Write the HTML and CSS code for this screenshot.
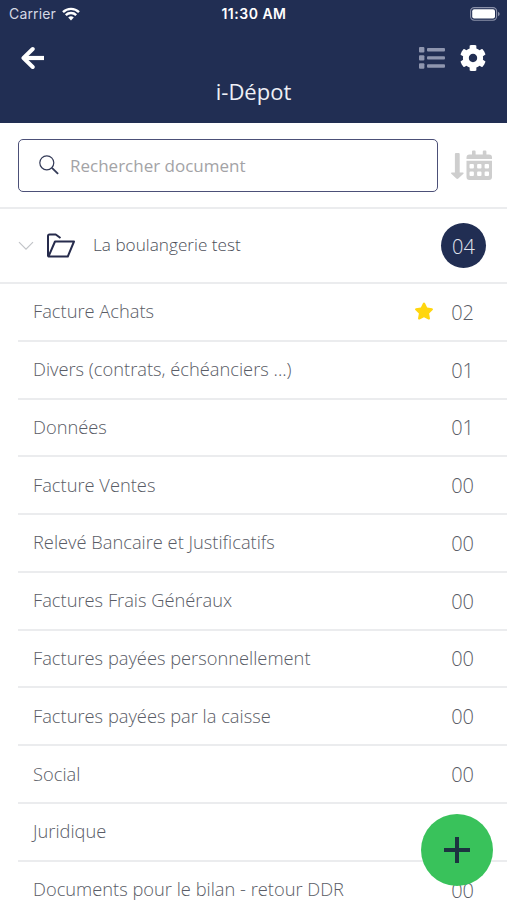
FILE: index.html
```html
<!DOCTYPE html>
<html lang="fr">
<head>
<meta charset="utf-8">
<title>i-Dépot</title>
<link rel="stylesheet" href="styles.css">
</head>
<body>
<header class="header">
  <div class="status">
    <div class="carrier"><span>Carrier</span>
      <svg class="wifi" viewBox="0 0 18 14" width="18" height="14" fill="none" stroke="#fff" stroke-width="2.4"><path d="M1 5.2a11.3 11.3 0 0 1 16 0M3.8 8.2a7.4 7.4 0 0 1 10.4 0"/><path d="M9 13.6l-2.8-3a4 4 0 0 1 5.6 0z" fill="#fff" stroke="none"/></svg>
    </div>
    <div class="time">11:30 AM</div>
    <svg class="battery" viewBox="0 0 30 14" width="30" height="14"><rect x=".6" y=".6" width="26" height="12.6" rx="3.6" fill="none" stroke="#8b91a9" stroke-width="1.1"/><rect x="2.2" y="2.2" width="22.8" height="9.4" rx="2" fill="#fff"/><path d="M28 4.8v4.4q1.7-.7 1.7-2.2T28 4.8z" fill="#8b91a9"/></svg>
  </div>
  <div class="toolbar">
    <svg class="back" viewBox="0 0 24 24" width="24" height="24" fill="none" stroke="#fff" stroke-width="4" stroke-linecap="round" stroke-linejoin="round"><path d="M11.700 3L2.500 12l9.200 9"/><path d="M4 12h19" stroke-linecap="butt" stroke-width="4.200"/></svg>
    <div class="actions">
      <svg viewBox="0 0 26 22" width="26" height="22" fill="#8f96af"><rect width="5.4" height="5.4" rx="1"/><rect y="8.2" width="5.4" height="5.4" rx="1"/><rect y="16.3" width="5.4" height="5.4" rx="1"/><rect x="8" y="1" width="18" height="3.4" rx="1"/><rect x="8" y="9.2" width="18" height="3.4" rx="1"/><rect x="8" y="17.3" width="18" height="3.4" rx="1"/></svg>
      <svg viewBox="8 8 496 496" width="26" height="26" fill="#fff"><path d="M487.400 315.700l-42.600-24.600c4.300-23.200 4.300-47 0-70.200l42.600-24.600c4.900-2.800 7.100-8.600 5.500-14-11.100-35.600-30-67.800-54.700-94.600-3.800-4.100-10-5.100-14.800-2.300L380.800 110c-17.900-15.400-38.500-27.300-60.800-35.100V25.800c0-5.600-3.900-10.500-9.400-11.700-36.700-8.200-74.300-7.800-109.200 0-5.500 1.200-9.400 6.100-9.400 11.700V75c-22.200 7.900-42.800 19.800-60.800 35.100L88.700 85.500c-4.900-2.800-11-1.900-14.800 2.300-24.700 26.700-43.600 58.900-54.700 94.600-1.700 5.400.6 11.200 5.500 14L67.300 221c-4.300 23.200-4.300 47 0 70.200l-42.600 24.600c-4.900 2.800-7.100 8.600-5.500 14 11.100 35.600 30 67.800 54.700 94.600 3.800 4.100 10 5.100 14.800 2.300l42.600-24.600c17.900 15.400 38.500 27.300 60.800 35.100v49.200c0 5.600 3.900 10.500 9.400 11.700 36.700 8.200 74.300 7.800 109.200 0 5.500-1.200 9.400-6.100 9.400-11.700v-49.200c22.200-7.900 42.800-19.800 60.800-35.100l42.600 24.600c4.900 2.800 11 1.900 14.800-2.300 24.700-26.700 43.600-58.900 54.700-94.600 1.500-5.500-.7-11.300-5.600-14.100zM256 336c-44.100 0-80-35.900-80-80s35.900-80 80-80 80 35.900 80 80-35.900 80-80 80z"/></svg>
    </div>
  </div>
  <h1 class="title">i-Dépot</h1>
</header>
<section class="search-bar">
  <div class="search">
    <svg viewBox="0 0 20 20" width="20" height="20" fill="none" stroke="#343b58"><circle cx="7.800" cy="7.800" r="7" stroke-width="1.200"/><path d="M12.900 12.900l6.200 6" stroke-width="1.900"/></svg>
    <span>Rechercher document</span>
  </div>
  <svg class="sort" viewBox="0 0 42 31" width="42" height="31" fill="#cecece"><path d="M3.900 4q0-1 1-1h2.800q1 0 1 1v18.500h3.200q1.300.2.500 1.300l-5.100 4.800q-1 .8-2 0L.3 23.800q-.8-1.100.4-1.300h3.200z"/><path fill-rule="evenodd" d="M15.500 9V7.500q0-3 3-3H21V1.500q0-1 1-1h1.600q1 0 1 1v3h7.200v-3q0-1 1-1h1.600q1 0 1 1v3H38q3 0 3 3V9zM15.500 10.800H41V27q0 3-3 3H18.500q-3 0-3-3zM18.500 15v2.600q0 1 1 1h2.400q1 0 1-1V15q0-1-1-1h-2.400q-1 0-1 1zm7.600 0v2.600q0 1 1 1h2.400q1 0 1-1V15q0-1-1-1h-2.400q-1 0-1 1zm7.500 0v2.600q0 1 1 1H37q1 0 1-1V15q0-1-1-1h-2.400q-1 0-1 1zM18.500 22.500v2.600q0 1 1 1h2.400q1 0 1-1v-2.600q0-1-1-1h-2.400q-1 0-1 1zm7.600 0v2.600q0 1 1 1h2.400q1 0 1-1v-2.600q0-1-1-1h-2.400q-1 0-1 1zm7.500 0v2.600q0 1 1 1H37q1 0 1-1v-2.600q0-1-1-1h-2.400q-1 0-1 1z"/></svg>
</section>
<section class="folder">
  <svg viewBox="0 0 16 10" width="16" height="10" fill="none" stroke="#c2c4c8" stroke-width="1.200"><path d="M1 1.200l7 7 7-7"/></svg>
  <svg class="folder-icon" viewBox="0 0 30 26" width="30" height="26" fill="none" stroke="#262b4c" stroke-width="2" stroke-linejoin="round"><path d="M2.500 23.500L9 8.500h19L21.800 23.500zM2 23.500V3q0-1.500 1.500-1.500h6.200L14.500 5"/></svg>
  <span class="folder-name">La boulangerie test</span>
  <span class="badge">04</span>
</section>
<ul class="list">
  <li class="row"><span class="label">Facture Achats</span><svg class="star" viewBox="20 0 536 512" width="18" height="18" fill="#ffd60f"><path d="M259.300 17.800L194 150.200 47.900 171.500c-26.200 3.800-36.700 36.100-17.700 54.600l105.700 103-25 145.500c-4.500 26.300 23.200 46 46.400 33.700L288 439.600l130.700 68.700c23.200 12.200 50.900-7.400 46.400-33.700l-25-145.500 105.700-103c19-18.500 8.500-50.800-17.700-54.600L382 150.200 316.700 17.800c-11.700-23.600-45.600-23.900-57.400 0z"/></svg><span class="count">02</span></li>
  <li class="row"><span class="label">Divers (contrats, échéanciers ...)</span><span class="count">01</span></li>
  <li class="row"><span class="label">Données</span><span class="count">01</span></li>
  <li class="row"><span class="label">Facture Ventes</span><span class="count">00</span></li>
  <li class="row"><span class="label">Relevé Bancaire et Justificatifs</span><span class="count">00</span></li>
  <li class="row"><span class="label">Factures Frais Généraux</span><span class="count">00</span></li>
  <li class="row"><span class="label">Factures payées personnellement</span><span class="count">00</span></li>
  <li class="row"><span class="label">Factures payées par la caisse</span><span class="count">00</span></li>
  <li class="row"><span class="label">Social</span><span class="count">00</span></li>
  <li class="row"><span class="label">Juridique</span><span class="count">00</span></li>
  <li class="row"><span class="label">Documents pour le bilan - retour DDR</span><span class="count">00</span></li>
</ul>
<button class="fab" aria-label="Ajouter"><svg viewBox="0 0 26 26" width="26" height="26" stroke="#1c3440" stroke-width="4"><path d="M13 0v26M0 13h26"/></svg></button>
</body>
</html>
```
FILE: styles.css
```css
* { box-sizing: border-box; }
body {
  margin: 0;
  height: 900px;
  overflow: hidden;
  background: #fff;
  color: #595c66;
  font-family: "Open Sans", sans-serif;
  font-weight: 300;
  font-size: 18.3px;
}
svg { display: block; flex: none; }
.header { height: 123px; background: #212e53; color: #fff; }
.status {
  display: grid;
  grid-template-columns: 1fr auto 1fr;
  align-items: center;
  height: 27px;
  padding: 0 8px 0 9px;
  font: 400 14px/27px Inter, sans-serif;
}
.carrier { display: flex; align-items: center; gap: 6px; color: #d5d9e4; letter-spacing: 0.15px; }
.time { font-weight: 600; letter-spacing: 0.5px; }
.battery { justify-self: end; margin-right: -1px; }
.toolbar {
  display: flex;
  justify-content: space-between;
  align-items: center;
  height: 62px;
  padding: 0 21px 0 21px;
}
.actions { display: flex; align-items: center; gap: 15px; }
.title {
  margin: -12px 0 0;
  text-align: center;
  font-size: 22px;
  font-weight: 400;
  line-height: 28px;
  color: #eef0f6;
}
.search-bar {
  display: flex;
  align-items: center;
  gap: 13px;
  height: 86px;
  padding: 0 13px 0 18px;
  border-bottom: 2px solid #ebecee;
}
.search {
  display: flex;
  align-items: center;
  gap: 11px;
  width: 420px;
  height: 53px;
  padding-left: 20px;
  border: 1.5px solid #4c5078;
  border-radius: 5px;
  color: #a3a3a6;
  font-size: 17px;
  font-weight: 400;
}
.folder {
  display: flex;
  align-items: center;
  height: 75px;
  padding: 0 21px 0 18px;
  border-bottom: 2px solid #ebecee;
}
.folder-icon { margin-left: 12px; }
.folder-name { margin-left: 17px; padding-bottom: 2px; font-size: 17.2px; color: #4c4f5a; }
.badge {
  display: grid;
  place-items: center;
  width: 45px;
  height: 45px;
  padding-top: 2px;
  margin-left: auto;
  border-radius: 50%;
  background: #212e53;
  color: #e3e6ef;
  font-size: 20px;
}
.list { margin: 0; padding: 0 0 0 18px; list-style: none; }
.row {
  display: flex;
  align-items: center;
  height: 57.77px;
  padding: 0 33px 0 15px;
  border-bottom: 2px solid #ebecee;
}
.label { padding-bottom: 2px; }
.count { margin-left: auto; padding-top: 1px; font-size: 20px; }
.star { margin: 0 0 1px auto; }
.star + .count { margin-left: 18px; }
.fab {
  position: fixed;
  right: 14px;
  bottom: 14px;
  display: grid;
  place-items: center;
  width: 72px;
  height: 72px;
  padding: 0;
  border: 0;
  border-radius: 50%;
  background: #39c25b;
}
```
